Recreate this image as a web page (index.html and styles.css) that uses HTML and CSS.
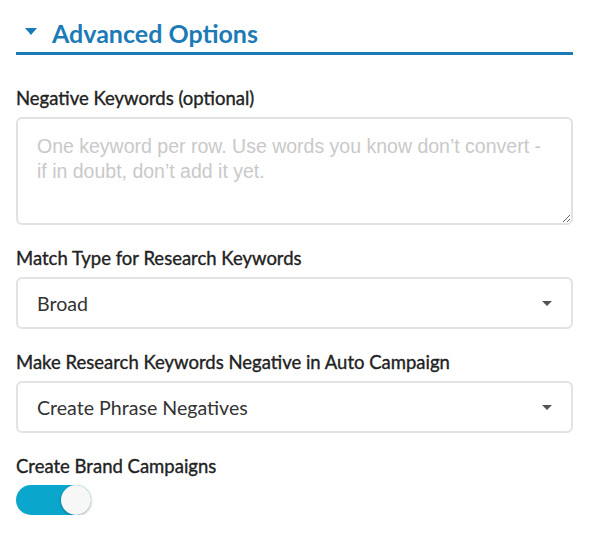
FILE: index.html
```html
<!DOCTYPE html>
<html>
<head>
<meta charset="utf-8">
<link rel="stylesheet" href="styles.css">
</head>
<body>
<div class="panel">
  <div class="section-head">
    <span class="tri"></span>
    <h2 class="section-title">Advanced Options</h2>
  </div>
  <div class="field first">
    <label class="label">Negative Keywords (optional)</label>
    <textarea class="textarea" placeholder="One keyword per row. Use words you know don’t convert - if in doubt, don’t add it yet."></textarea>
  </div>
  <div class="field">
    <label class="label">Match Type for Research Keywords</label>
    <div class="select"><span>Broad</span><span class="caret"></span></div>
  </div>
  <div class="field">
    <label class="label">Make Research Keywords Negative in Auto Campaign</label>
    <div class="select"><span>Create Phrase Negatives</span><span class="caret"></span></div>
  </div>
  <div class="field">
    <label class="label">Create Brand Campaigns</label>
    <div class="toggle"><span class="knob"></span></div>
  </div>
</div>
</body>
</html>
```
FILE: styles.css
```css
html, body {
  margin: 0;
  padding: 0;
  background: #ffffff;
}
body {
  font-family: Lato, "Noto Sans", sans-serif;
  color: #222222;
}
.panel {
  width: 557px;
  padding: 15px 0 0 16px;
}
.section-head {
  display: flex;
  align-items: center;
  gap: 15px;
  padding-left: 9px;
  padding-bottom: 2px;
  height: 35px;
  border-bottom: 3px solid #1c7bb6;
}
.tri {
  width: 0;
  height: 0;
  border-left: 6px solid transparent;
  border-right: 6px solid transparent;
  border-top: 7px solid #1c7bb6;
  margin-top: -2px;
}
.section-title {
  margin: 0;
  font-size: 25px;
  font-weight: 700;
  color: #1c7bb6;
  line-height: 30px;
}
.field {
  display: flex;
  flex-direction: column;
  gap: 8px;
  margin-top: 22px;
}
.field.first {
  margin-top: 32px;
}
.label {
  font-size: 18.5px;
  font-weight: 400;
  line-height: 22px;
  color: #222222;
  -webkit-text-stroke: 0.35px #222222;
}
.textarea {
  box-sizing: border-box;
  width: 557px;
  height: 108px;
  border: 2px solid #e2e2e2;
  border-radius: 6px;
  padding: 15px 22px 15px 19px;
  font-family: "Liberation Sans", Arial, sans-serif;
  font-size: 19.5px;
  line-height: 25px;
  color: #333;
  resize: vertical;
  outline: none;
  margin: 0;
}
.textarea::placeholder {
  font-family: "Liberation Sans", Arial, sans-serif;
  color: #c9c9c9;
}
.select {
  box-sizing: border-box;
  height: 52px;
  border: 2px solid #e3e3e3;
  border-radius: 6px;
  display: flex;
  align-items: center;
  justify-content: space-between;
  padding: 0 19px;
  font-size: 19.6px;
  color: #333333;
}
.caret {
  width: 0;
  height: 0;
  border-left: 5px solid transparent;
  border-right: 5px solid transparent;
  border-top: 5px solid #555555;
}
.toggle {
  position: relative;
  width: 75px;
  height: 30px;
  border-radius: 15px;
  background: #0ba6cb;
}
.knob {
  position: absolute;
  top: 0;
  right: 0;
  width: 30px;
  height: 30px;
  border-radius: 50%;
  background: #f7f7f7;
  box-shadow: 0 1px 3px rgba(0,0,0,0.3);
}
```
